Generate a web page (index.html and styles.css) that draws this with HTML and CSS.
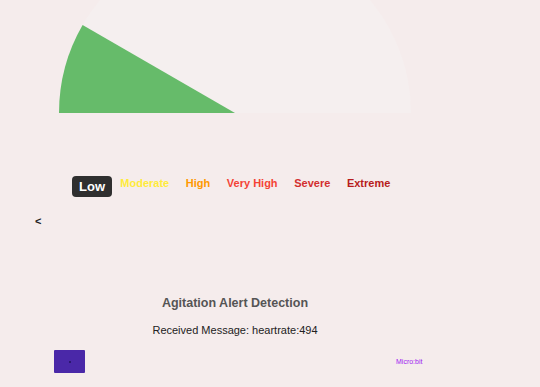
FILE: index.html
```html
<!DOCTYPE html>
<html>
<head>
<meta charset="utf-8">
<link rel="stylesheet" href="styles.css">
</head>
<body>
<div class="page">
  <svg class="gauge" width="470" height="113" viewBox="0 0 470 113">
    <path d="M59,113 A176,176 0 0 1 411,113 Z" fill="#f5efef"/>
    <path d="M235,113 L59,113 A176,176 0 0 1 82.6,25 Z" fill="#66bb6a"/>
  </svg>
  <div class="legend">
    <span class="lvl low">Low</span>
    <span class="lvl moderate">Moderate</span>
    <span class="lvl high">High</span>
    <span class="lvl vhigh">Very High</span>
    <span class="lvl severe">Severe</span>
    <span class="lvl extreme">Extreme</span>
  </div>
  <div class="back">&lt;</div>
  <h2 class="title">Agitation Alert Detection</h2>
  <p class="msg">Received Message: heartrate:494</p>
  <div class="footer">
    <button class="btn"><span class="dot"></span></button>
    <span class="mb">Micro:bit</span>
  </div>
</div>
</body>
</html>
```
FILE: styles.css
```css
html, body {
  margin: 0;
  padding: 0;
  background: #f5ecec;
  font-family: "Liberation Sans", Arial, sans-serif;
}
.page {
  width: 470px;
}
.gauge {
  display: block;
}
.legend {
  display: flex;
  align-items: flex-start;
  margin-top: 60px;
  padding-left: 72px;
}
.lvl {
  font-weight: bold;
  font-size: 11px;
  padding: 0 8.3px;
  line-height: 21px;
}
.low {
  background: #2f2f2f;
  color: #fff;
  font-size: 13px;
  border-radius: 4px;
  padding: 0 7px;
  margin-top: 3px;
}
.moderate { color: #ffeb3b; }
.high { color: #ff9800; }
.vhigh { color: #f44336; }
.severe { color: #d32f2f; }
.extreme { color: #b71c1c; }
.back {
  margin: 17px 0 0 35px;
  font-size: 11px;
  font-weight: bold;
  color: #222;
  line-height: 14px;
}
.title {
  margin: 67px 0 0 0;
  text-align: center;
  font-size: 12.5px;
  font-weight: bold;
  color: #555;
  line-height: 16px;
}
.msg {
  margin: 12px 0 0 0;
  text-align: center;
  font-size: 11px;
  color: #222;
  line-height: 14px;
}
.footer {
  display: flex;
  align-items: center;
  margin-top: 13px;
  padding-left: 54px;
}
.btn {
  width: 31px;
  height: 23px;
  background: #4a28a8;
  border: none;
  border-radius: 1px;
  padding: 0;
  display: flex;
  align-items: center;
  justify-content: center;
}
.dot {
  width: 2px;
  height: 2px;
  background: #2a1870;
}
.mb {
  margin-left: 311px;
  font-size: 7px;
  color: #a020f0;
}
```
